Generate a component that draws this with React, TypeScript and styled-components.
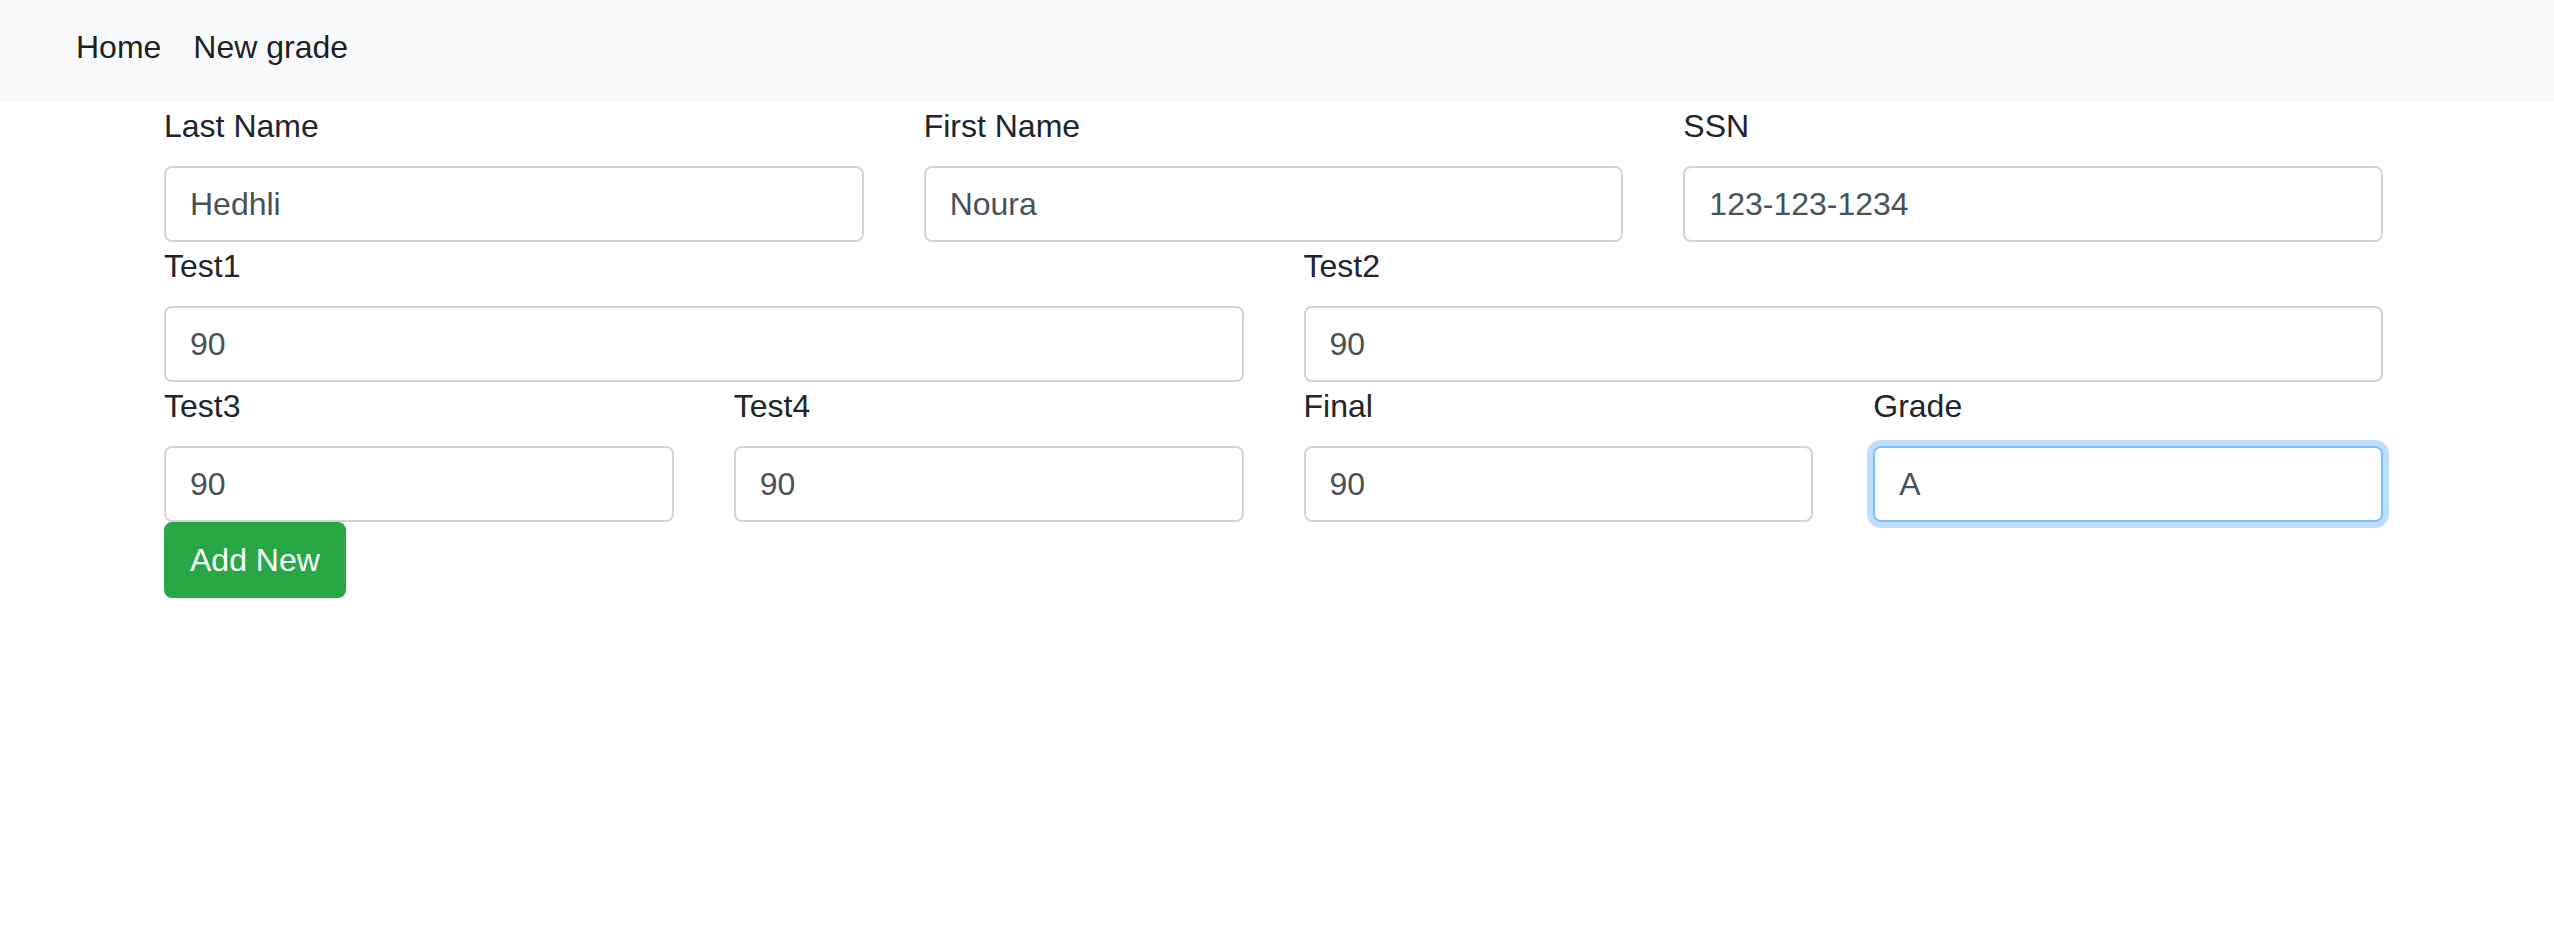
import React from 'react';
import styled, { createGlobalStyle } from 'styled-components';

interface Field {
  id: string;
  label: string;
  value: string;
  focused?: boolean;
}

const GlobalStyle = createGlobalStyle`
  html, body {
    margin: 0;
    padding: 0;
    background: #fff;
  }

  body {
    font-family: "Liberation Sans", Arial, Helvetica, sans-serif;
    font-size: 32px;
    line-height: 48px;
    color: #212529;
  }

  *, *::before, *::after {
    box-sizing: border-box;
  }
`;

const NavBar = styled.nav`
  display: flex;
  align-items: flex-start;
  height: 102px;
  padding: 23px 60px 0;
  background: #f8f9fa;
`;

const NavLink = styled.a`
  padding: 0 16px;
  font-size: 32px;
  line-height: 48px;
  color: rgba(0, 0, 0, 0.9);
  text-decoration: none;
  cursor: pointer;
`;

const Container = styled.div`
  max-width: 2280px;
  margin: 0 auto;
  padding: 0 34px 0 27px;
`;

const Row = styled.div<{ $cols: number }>`
  display: grid;
  grid-template-columns: repeat(${(p) => p.$cols}, 1fr);
  column-gap: 60px;
`;

const Group = styled.div`
  display: flex;
  flex-direction: column;
`;

const Label = styled.label`
  display: block;
  margin-bottom: 16px;
  font-size: 32px;
  line-height: 48px;
  color: #212529;
`;

const Input = styled.input<{ $focused?: boolean }>`
  display: block;
  width: 100%;
  height: 76px;
  padding: 12px 24px;
  font-family: inherit;
  font-size: 32px;
  line-height: 48px;
  color: #495057;
  background: #fff;
  border: 2px solid ${(p) => (p.$focused ? '#80bdff' : '#ced4da')};
  border-radius: 8px;
  outline: none;
  box-shadow: ${(p) => (p.$focused ? '0 0 0 6px rgba(0, 123, 255, 0.25)' : 'none')};
`;

const SubmitButton = styled.button`
  align-self: flex-start;
  padding: 12px 24px;
  font-family: inherit;
  font-size: 32px;
  line-height: 48px;
  color: #fff;
  background: #28a745;
  border: 2px solid #28a745;
  border-radius: 8px;
  cursor: pointer;
`;

const Form = styled.form`
  display: flex;
  flex-direction: column;
`;

const rows: Field[][] = [
  [
    { id: 'lastName', label: 'Last Name', value: 'Hedhli' },
    { id: 'firstName', label: 'First Name', value: 'Noura' },
    { id: 'ssn', label: 'SSN', value: '123-123-1234' },
  ],
  [
    { id: 'test1', label: 'Test1', value: '90' },
    { id: 'test2', label: 'Test2', value: '90' },
  ],
  [
    { id: 'test3', label: 'Test3', value: '90' },
    { id: 'test4', label: 'Test4', value: '90' },
    { id: 'final', label: 'Final', value: '90' },
    { id: 'grade', label: 'Grade', value: 'A', focused: true },
  ],
];

export default function App() {
  return (
    <>
      <GlobalStyle />
      <NavBar>
        <NavLink>Home</NavLink>
        <NavLink>New grade</NavLink>
      </NavBar>
      <Container>
        <Form onSubmit={(e) => e.preventDefault()}>
          {rows.map((row, i) => (
            <Row key={i} $cols={row.length}>
              {row.map((field) => (
                <Group key={field.id}>
                  <Label htmlFor={field.id}>{field.label}</Label>
                  <Input
                    id={field.id}
                    defaultValue={field.value}
                    $focused={field.focused}
                  />
                </Group>
              ))}
            </Row>
          ))}
          <SubmitButton type="submit">Add New</SubmitButton>
        </Form>
      </Container>
    </>
  );
}
